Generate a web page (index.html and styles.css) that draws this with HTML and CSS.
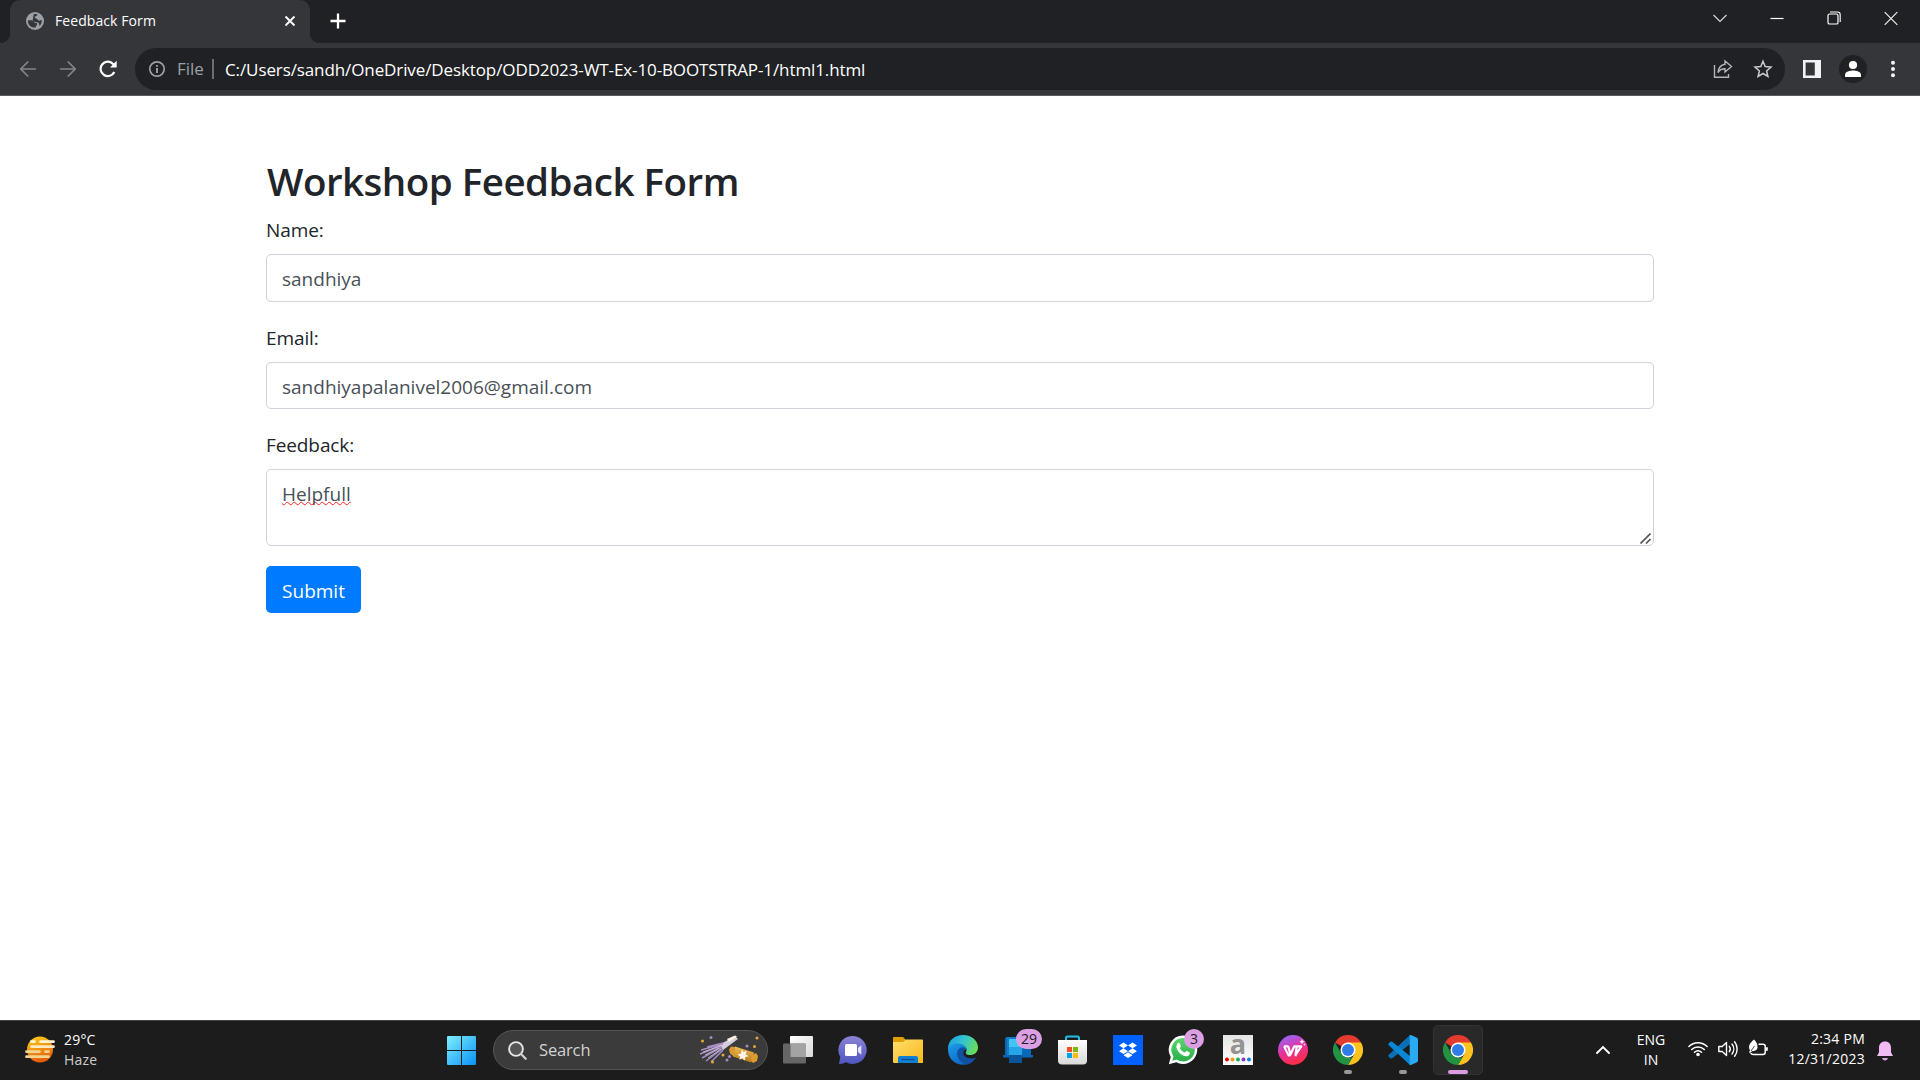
FILE: index.html
```html
<!DOCTYPE html>
<html lang="en">
<head>
<meta charset="utf-8">
<title>Feedback Form</title>
<link rel="stylesheet" href="styles.css">
</head>
<body>
<div class="screen">
  <header class="browser">
    <div class="tabstrip">
      <div class="tab">
        <svg class="globe" width="18" height="18" viewBox="0 0 18 18"><circle cx="9" cy="9" r="9" fill="#9aa0a6"/><path d="M2 8.2h3.2c2.6 0 2.2 2.6 4.2 2.6 1.600 0 1.900.8 1.700 1.800-.3 1.200-1.300 1.100-1.400 2.900-3.900.7-8.400-2.500-7.700-7.300zM7.800 2.200c2-.4 3 0 3.800.3-.2 1.600-2.600 1.300-2.800 2.600-.1 1.400 1.300 1.200 2.200 1.800 1 .7 1 1.700 2.200 1.800 1 .1 1.200-.6 2.500-.6.3 2.600-.8 4.900-2.400 6.200.3-2.200-.3-3.500-2.100-4-1.900-.5-3.700-.3-4.300-1.900-.6-1.500.6-2 .3-3.400z" fill="#35363a"/></svg>
        <span class="tab-title">Feedback Form</span>
        <svg class="tab-close" width="12" height="12" viewBox="0 0 12 12"><path d="M1.500 1.500l9 9m0-9l-9 9" stroke="#fff" stroke-width="1.900"/></svg>
      </div>
      <svg class="new-tab" width="16" height="16" viewBox="0 0 16 16"><path d="M8 .5v15M.5 8h15" stroke="#fff" stroke-width="2.300"/></svg>
      <div class="window-buttons">
        <svg width="14" height="20" viewBox="0 0 14 20"><path d="M.5 7L7 13.500 13.500 7" fill="none" stroke="#ddd" stroke-width="1.100"/></svg>
        <svg width="14" height="20" viewBox="0 0 14 20"><path d="M.5 10.500h13" stroke="#fff" stroke-width="1.200"/></svg>
        <svg width="14" height="20" viewBox="0 0 14 20"><rect x="1" y="6" width="10" height="10" rx="1.600" fill="none" stroke="#fff" stroke-width="1.200"/><path d="M3 4h7.500q2.700 0 2.700 2.700V14" fill="none" stroke="#fff" stroke-width="1.100"/></svg>
        <svg width="14" height="20" viewBox="0 0 14 20"><path d="M.7 4.200l12.600 12.600m0-12.600L.7 16.800" stroke="#eee" stroke-width="1.200"/></svg>
      </div>
    </div>
    <div class="toolbar">
      <div class="nav">
        <svg width="18" height="18" viewBox="0 0 18 18"><path d="M17 9H2M9.300 1.500L1.800 9l7.500 7.500" fill="none" stroke="#85868a" stroke-width="1.700"/></svg>
        <svg width="18" height="18" viewBox="0 0 18 18"><path d="M1 9h15M8.700 1.500L16.200 9l-7.500 7.500" fill="none" stroke="#85868a" stroke-width="1.700"/></svg>
        <svg width="18" height="18" viewBox="0 0 18 18"><path d="M15.300 12A7.200 7.200 0 1 1 13.800 3.700L15.500 5.500" fill="none" stroke="#fff" stroke-width="2.200"/><path d="M17.700.8v6.700H11z" fill="#fff"/></svg>
      </div>
      <div class="omnibox">
        <svg width="18" height="18" viewBox="0 0 18 18"><circle cx="9" cy="9" r="7.200" fill="none" stroke="#9aa0a6" stroke-width="1.700"/><path d="M9 8v5M9 5v1.800" stroke="#9aa0a6" stroke-width="1.900"/></svg>
        <span class="scheme">File</span>
        <span class="url">C:/Users/sandh/OneDrive/Desktop/ODD2023-WT-Ex-10-BOOTSTRAP-1/html1.html</span>
        <svg class="share" width="20" height="20" viewBox="0 0 20 20"><path d="M1.500 6v12.200h14V15M12 2l6.500 5.500-6.500 5.500V9.800C8.500 9.800 6.500 11 5 13.600 5.400 9 7.800 6 12 5.300z" fill="none" stroke="#b4b6b8" stroke-width="1.400"/></svg>
        <svg width="20" height="20" viewBox="0 0 20 20"><path d="M10 2.300l2.200 5.300 5.800.5-4.400 3.800 1.300 5.600L10 14.500l-4.900 3 1.300-5.600L2 8.100l5.800-.5z" fill="none" stroke="#c8cacc" stroke-width="1.500"/></svg>
      </div>
      <div class="tools">
        <svg width="18" height="18" viewBox="0 0 18 18"><path d="M0 0h18v18H0zM2.600 2.600v12.800h9.200V2.600z" fill="#f1f3f4" fill-rule="evenodd"/></svg>
        <svg width="28" height="28" viewBox="0 0 28 28"><circle cx="14" cy="14" r="14" fill="#202124"/><circle cx="14" cy="10" r="4.100" fill="#fff"/><path d="M6 22v-2.200c0-3 5-4.300 8-4.300s8 1.300 8 4.300V22z" fill="#fff"/></svg>
        <svg width="6" height="18" viewBox="0 0 6 18"><g fill="#f1f3f4"><circle cx="3" cy="2.700" r="2"/><circle cx="3" cy="9" r="2"/><circle cx="3" cy="15.300" r="2"/></g></svg>
      </div>
    </div>
  </header>

  <main class="page">
    <div class="container">
      <h2>Workshop Feedback Form</h2>
      <form>
        <div class="form-group">
          <label for="name">Name:</label>
          <input class="form-control" id="name" type="text" value="sandhiya">
        </div>
        <div class="form-group">
          <label for="email">Email:</label>
          <input class="form-control email" id="email" type="email" value="sandhiyapalanivel2006@gmail.com">
        </div>
        <div class="form-group">
          <label>Feedback:</label>
          <div class="form-control area"><span class="misspelled">Helpfull</span>
            <svg class="grip" width="11" height="11" viewBox="0 0 11 11"><path d="M.5 10.500l10-10M6 10.500L10.500 6" stroke="#555" stroke-width="1.600"/></svg>
          </div>
        </div>
        <button type="button" class="btn">Submit</button>
      </form>
    </div>
  </main>

  <footer class="taskbar">
    <div class="weather">
      <svg width="30" height="27" viewBox="0 0 30 27"><defs><linearGradient id="sun" x1="0" y1="0" x2=".3" y2="1"><stop offset="0" stop-color="#ffd21a"/><stop offset="1" stop-color="#e85d0c"/></linearGradient></defs><circle cx="15" cy="13.500" r="13" fill="url(#sun)"/><g stroke-width="2.800" stroke-linecap="round"><path d="M6.500 5.700h3M15.500 5.700h13" stroke="#fff3d0"/><path d="M6.500 10.700h22" stroke="#fdebc0"/><path d="M1.500 15.700h13M20.500 15.700h3M1.500 20.700h22" stroke="#f0d490"/></g></svg>
      <div class="weather-text"><span>29°C</span><span class="cond">Haze</span></div>
    </div>
    <div class="apps">
      <div class="app"><svg width="29" height="29" viewBox="0 0 29 29"><defs><linearGradient id="win" x1="0" y1="0" x2="1" y2="1"><stop offset="0" stop-color="#7df0ff"/><stop offset="1" stop-color="#0a90f5"/></linearGradient></defs><path d="M0 1q0-1 1-1h13v14H0zM15 0h13q1 0 1 1v13H15zM0 15h14v14H1q-1 0-1-1zM15 15h14v13q0 1-1 1H15z" fill="url(#win)"/></svg></div>
      <div class="search">
        <svg width="19" height="19" viewBox="0 0 19 19"><circle cx="8" cy="8" r="6.900" fill="#555" stroke="#e6e6e6" stroke-width="1.900"/><path d="M13 13l4.700 4.700" stroke="#d0d0d0" stroke-width="2.300" stroke-linecap="round"/></svg>
        <span class="search-label">Search</span>
        <svg class="party" width="60" height="30" viewBox="0 0 60 30"><defs><linearGradient id="gold" x1="0" y1="0" x2="0" y2="1"><stop offset="0" stop-color="#f0bd57"/><stop offset="1" stop-color="#b97919"/></linearGradient></defs><path d="M36 1l3 3-15 11-4-5z" fill="#d8cddd"/><path d="M38 1.500L30 7l-2-3 8-3.500z" fill="#fff0e4"/><path d="M24 9L2 15m20-4L1 19m22-7L3 23m20-9L7 26m17-11L12 27M24 8L8 12" stroke="#a58cc4" stroke-width="1.500" fill="none"/><path d="M23 10L4 17m18-3L9 23m-3-3l14-7" stroke="#eadbe8" stroke-width=".7"/><path d="M36 11.500l19 6-3 10-18-6z" fill="url(#gold)"/><path d="M36 12l-4-.5-2 3 1 4 4 3zM53 20l4-2 2 3-1 5-4 2-2-2z" fill="#dc9b30"/><path d="M43 14l1.400 3.100 3.300-1-1 3.200 3 2-3.500.8-.2 3.400-2.700-2.300-3 1.600.9-3.400-2.900-2 3.500-.6z" fill="#fff5e8"/><g fill="#e5a63d"><circle cx="3.500" cy="6" r="1.500"/><circle cx="13.500" cy="27" r="1.500"/><circle cx="24" cy="20" r="1.500"/><circle cx="58" cy="3" r="1.500"/><circle cx="55.500" cy="11.500" r="1.500"/></g><g fill="#a98abd"><circle cx="12" cy="2.500" r="1.500"/><circle cx="48" cy="11" r="1.500"/><circle cx="30.500" cy="21.500" r="1.500"/><circle cx="28" cy="25" r="1.500"/></g></svg>
      </div>
      <div class="app"><svg width="30" height="28" viewBox="0 0 30 28"><defs><linearGradient id="tv" x1="0" y1="0" x2="1" y2="1"><stop offset="0" stop-color="#fff"/><stop offset="1" stop-color="#d8d8d8"/></linearGradient></defs><rect x="7" width="23" height="21" rx="1" fill="url(#tv)"/><rect y="7.500" width="23" height="20" rx="1" fill="#666"/><path d="M7.500 8H23v13H7.500z" fill="#a3a3a3"/></svg></div>
      <div class="app"><svg width="30" height="30" viewBox="0 0 30 30"><defs><linearGradient id="chat" x1="0" y1="0" x2="0" y2="1"><stop offset="0" stop-color="#8b83d6"/><stop offset="1" stop-color="#5055c0"/></linearGradient></defs><path d="M15 1a14 14 0 1 1-7 26.300Q4 29.500 1 29l1.300-7A14 14 0 0 1 15 1z" fill="url(#chat)"/><rect x="7" y="9" width="12" height="12" rx="1.500" fill="#fff"/><path d="M20 13l3.300-2.800v9.600L20 17z" fill="#e8e5fa"/></svg></div>
      <div class="app"><svg width="30" height="26" viewBox="0 0 30 26"><defs><linearGradient id="fold" x1="0" y1="0" x2="1" y2="1"><stop offset="0" stop-color="#ffdf70"/><stop offset="1" stop-color="#f8b818"/></linearGradient></defs><path d="M0 1q0-1 1-1h9l2.500 2.500V8H0z" fill="#dfa000"/><path d="M0 5h10l3-2.500h16q1 0 1 1V26H1q-1 0-1-1z" fill="url(#fold)"/><path d="M5 26v-5q0-2 2-2h16q2 0 2 2v5z" fill="#0f7fd2"/><path d="M8.500 22.500h13" stroke="#0a4d91" stroke-width="1.200"/></svg></div>
      <div class="app"><svg width="30" height="30" viewBox="0 0 30 30"><defs><linearGradient id="edge1" x1="0" y1=".2" x2="1" y2=".5"><stop offset="0" stop-color="#1c9fe0"/><stop offset=".5" stop-color="#33c5d0"/><stop offset="1" stop-color="#68dc58"/></linearGradient><linearGradient id="edge2" x1="0" y1="0" x2=".6" y2="1"><stop offset="0" stop-color="#1c9ce8"/><stop offset="1" stop-color="#0b69c5"/></linearGradient></defs><path d="M0 14C0 5 7 0 15 0c9 0 15 6 15 12.500 0 5-4 7.500-8 7.500-3.500 0-5-1.500-4-3 2-3-1-7-6-7-6 0-11 2-12 5z" fill="url(#edge1)"/><path d="M0 14.500C1 10 6 8.500 10 8.500c5 0 8.500 3 8.500 6-3 0-6 3-5 7 1 3.500 5 8 10 6C14 33 0 28 0 14.500z" fill="url(#edge2)"/><path d="M10 15c3-4 7-3 8.500-.5-2 0-3.500 2-3 4.500 1 4 7 5.500 12.500 3.500-2 4-6 6.500-9 7C12 28 7 21 10 15z" fill="#114fa0"/></svg></div>
      <div class="app"><svg width="30" height="30" viewBox="0 0 30 30"><path d="M2 4q0-2 2-2h22q2 0 2 2v16h2v1.500q0 1-1 1H1q-1 0-1-1V20h2z" fill="#0968b8"/><path d="M4 2h12v18H4z" fill="#127bca"/><path d="M6 4h13v24H7q-1 0-1-1z" fill="#25a4e7"/><path d="M6 4h13v8H6z" fill="#43c5f4"/><path d="M6 20h13v8H7q-1 0-1-1z" fill="#08559b"/></svg><span class="badge two">29</span></div>
      <div class="app"><svg class="store" width="30" height="30" viewBox="0 0 30 30"><defs><linearGradient id="bag" x1="0" y1="0" x2="0" y2="1"><stop offset="0" stop-color="#fff"/><stop offset="1" stop-color="#d8d8d8"/></linearGradient></defs><path d="M8 6V3q0-1.500 1.500-1.500h10Q21 1.500 21 3v3" fill="none" stroke="#24bde8" stroke-width="2"/><path d="M0 5h29v20.500q0 4-4 4H4q-4 0-4-4z" fill="url(#bag)"/><path d="M9 12h5v5H9z" fill="#f25022"/><path d="M15 12h5v5h-5z" fill="#7fba00"/><path d="M9 18h5v5H9z" fill="#00a4ef"/><path d="M15 18h5v5h-5z" fill="#ffb900"/></svg></div>
      <div class="app"><svg width="30" height="30" viewBox="0 0 30 30"><path d="M0 0h30v30H0z" fill="#0061fe"/><path d="M10.500 7.500L15 10.400l-4.500 2.900L6 10.400zM19.500 7.500l4.500 2.900-4.500 2.900-4.500-2.900zM10.500 13.300l4.500 2.900-4.500 2.900L6 16.200zM19.500 13.300l4.500 2.900-4.500 2.900-4.500-2.900zM15 17.300l4.500 2.900L15 23.100l-4.500-2.900z" fill="#fff"/></svg></div>
      <div class="app"><svg width="30" height="30" viewBox="0 0 30 30"><defs><linearGradient id="wa" x1="0" y1="0" x2="0" y2="1"><stop offset="0" stop-color="#5ed66e"/><stop offset="1" stop-color="#27ae48"/></linearGradient></defs><path d="M15.300.5a14.200 14.200 0 1 1-7 26.700L.8 29.300l2-7.300A14.200 14.200 0 0 1 15.300.5z" fill="#fff"/><path d="M15.300 3a11.700 11.700 0 1 1-6.600 21.500L4.300 25.800l1.200-4.400A11.700 11.700 0 0 1 15.300 3z" fill="url(#wa)"/><path d="M9.500 8.500c1-1.200 2-.9 2.400.1l1 2.400c.2.800-1 1.600-1.200 2 1 2 2.700 3.700 5 4.600.6-.2 1.300-1.900 2-1.700l3 1.500c.7 1.500-1 3.700-3.300 3.800-4.600.2-10-5.500-10-9.400 0-1.300.5-2.500 1.100-3.300z" fill="#fff"/></svg><span class="badge one">3</span></div>
      <div class="app"><div class="amazon"><span class="amazon-a">a</span><svg width="30" height="30" viewBox="0 0 30 30"><circle cx="4" cy="24.500" r="2" fill="#e00"/><circle cx="9.500" cy="24.500" r="2" fill="#f59a13"/><circle cx="15" cy="24.500" r="2" fill="#15b35a"/><circle cx="20.500" cy="24.500" r="2" fill="#8a35d5"/><circle cx="26" cy="24.500" r="2" fill="#0a84dd"/></svg></div></div>
      <div class="app"><svg width="30" height="30" viewBox="0 0 30 30"><defs><linearGradient id="wps" x1=".2" y1="0" x2=".6" y2="1"><stop offset="0" stop-color="#8f6bff"/><stop offset=".5" stop-color="#e632a0"/><stop offset="1" stop-color="#ff2d3d"/></linearGradient></defs><circle cx="15" cy="15" r="15" fill="url(#wps)"/><path d="M6 11.300h3.300q1 0 1.300 1l1.700 7.500 4-8.500h2.500l-1.300 8.700 5.800-8.700h-3.600" fill="none" stroke="#fff" stroke-width="2.200" stroke-linejoin="round"/><path d="M6 11.300l4.600 9.200h1.700M17.500 20.500h1" fill="none" stroke="#fff" stroke-width="2"/><path d="M24 4l.8 2 2 .8-2 .8-.8 2-.8-2-2-.8 2-.8zM26.500 8.500l1 1-1 1-1-1z" fill="#fff"/></svg></div>
      <div class="app"><svg width="30" height="30" viewBox="0 0 30 30"><g id="chrome"><path d="M15 15L2 7.500A15 15 0 0 1 28 7.500z" fill="#e33b2e"/><path d="M15 7.500h13A15 15 0 0 1 15 30l6.500-11.200z" fill="#fcc31e"/><path d="M2 7.500l6.500 11.300c1.300 2.300 4 3.700 6.500 3.700h4.300L15 30A15 15 0 0 1 2 7.500z" fill="#229342"/><circle cx="15" cy="15" r="7.500" fill="#fff"/><circle cx="15" cy="15" r="6" fill="#2f7de9"/></g></svg><i class="running"></i></div>
      <div class="app"><svg width="30" height="30" viewBox="0 0 30 30"><path d="M1 19.500q-1.500 1.200 0 2.500l1.300 1.200q1 .8 2 0L22 9V0z" fill="#0a6fb5"/><path d="M1 10.500Q-.5 9.300 1 8l1.300-1.200q1-.8 2 0L22 21v9z" fill="#0a87d4"/><path d="M21.700.300Q22.500-.2 23.500.2l5.500 2.600q1 .5 1 1.700v21q0 1.200-1 1.700l-5.500 2.600q-1 .4-1.800-.1z" fill="#29aaf2"/></svg><i class="running"></i></div>
      <div class="app active"><svg width="30" height="30" viewBox="0 0 30 30"><use href="#chrome"/></svg><i class="running wide"></i></div>
    </div>
    <div class="tray">
      <svg class="chev" width="14" height="9" viewBox="0 0 14 9"><path d="M1 8l6-6 6 6" fill="none" stroke="#fff" stroke-width="1.900" stroke-linecap="round"/></svg>
      <div class="lang"><span>ENG</span><span>IN</span></div>
      <div class="status">
        <svg width="20" height="20" viewBox="0 0 20 20"><g fill="none" stroke="#fff" stroke-width="1.500" stroke-linecap="round"><path d="M.9 7.500a13 13 0 0 1 18.200 0M3.700 10.500a9 9 0 0 1 12.600 0M6.500 13.300a5 5 0 0 1 7 0"/></g><circle cx="10" cy="15.500" r="1.800" fill="#fff"/></svg>
        <svg width="20" height="20" viewBox="0 0 20 20"><g fill="none" stroke="#fff" stroke-width="1.400" stroke-linecap="round" stroke-linejoin="round"><path d="M.8 7.500h3.400L8.500 3.500v13l-4.300-4H.8zM11.300 7.300a4.500 4.500 0 0 1 0 5.400M14 5a8 8 0 0 1 0 10M16.600 2.800a11.500 11.500 0 0 1 0 14.400"/></g></svg>
        <svg width="20" height="20" viewBox="0 0 20 20"><path d="M10.500 5.200H15q2.200 0 2.200 2v6q0 2.200-2.200 2.200H5.500Q3 15.400 3 14" fill="none" stroke="#fff" stroke-width="1.500"/><path d="M18 8.300h1.800v3.400H18z" fill="#fff"/><path d="M6 .5C8 2.500 9.800 5 9.500 8.500 9.300 11 7 12.500 4.500 12l-2.500 2-1-.8 1-2C0 8 1 4.500 6 .5z" fill="#fff"/><path d="M6.500 7L3 12" stroke="#1c1c1c" stroke-width=".8"/></svg>
      </div>
      <div class="clock"><span>2:34 PM</span><span>12/31/2023</span></div>
      <svg class="bell" width="16" height="20" viewBox="0 0 16 20"><path d="M8 .5c3.800 0 6 2.700 6 6.200v4.500l2 3.800H0l2-3.800V6.700C2 3.200 4.200.5 8 .5z" fill="#f0bcf3"/><path d="M5 17h6q-.8 2.500-3 2.500T5 17z" fill="#d69fe0"/></svg>
    </div>
  </footer>
</div>
</body>
</html>
```
FILE: styles.css
```css
* { box-sizing: border-box; }
body { margin: 0; font-family: "Open Sans", "Noto Sans", sans-serif; }
svg { display: block; flex: none; }
.screen { width: 1920px; height: 1080px; display: flex; flex-direction: column; overflow: hidden; background: #fff; }

/* Browser frame */
.browser { height: 96px; background: #35363a; border-bottom: 1px solid #5a5b5e; color: #fff; }
.tabstrip { height: 43px; background: #202124; display: flex; align-items: flex-start; padding-left: 10px; }
.tab { position: relative; width: 300px; height: 43px; display: flex; align-items: center; padding: 0 14px 1px 16px; background: #35363a; border-radius: 10px 10px 0 0; }
.tab::before, .tab::after { content: ""; position: absolute; bottom: 0; width: 10px; height: 10px; }
.tab::before { left: -10px; background: radial-gradient(circle at 0 0, transparent 10px, #35363a 10.500px); }
.tab::after { right: -10px; background: radial-gradient(circle at 100% 0, transparent 10px, #35363a 10.500px); }
.tab-title { margin-left: 11px; font-size: 14px; line-height: 20px; letter-spacing: .08px; white-space: nowrap; }
.tab-close { margin-left: auto; }
.new-tab { margin: 13px 0 0 19.500px; }
.window-buttons { margin-left: auto; display: flex; gap: 43px; padding: 8px 22px 0 0; }
.toolbar { height: 52px; display: flex; align-items: center; }
.nav { width: 135px; display: flex; gap: 22px; padding-left: 19px; }
.omnibox { width: 1650px; height: 42px; border-radius: 21px; background: #202124; display: flex; align-items: center; padding: 0 12px 0 13px; font-size: 17px; }
.scheme { margin-left: 11px; width: 35px; color: #9aa0a6; border-right: 2px solid #6a6d71; line-height: 20px; box-sizing: content-box; }
.url { margin-left: 11px; white-space: nowrap; letter-spacing: -.105px; }
.share { margin: 0 20px 0 auto; }
.tools { display: flex; align-items: center; padding-left: 18px; gap: 18px; }
.tools svg:last-child { margin-left: 5px; }

/* Form */
.page { flex: 1; padding-top: 60px; color: #212529; }
.container { width: 1388px; margin: 0 auto; }
h2 { height: 48px; margin: 0 0 10px; padding: 1px 0 0 1px; font-size: 38.500px; line-height: 48px; font-weight: 600; letter-spacing: -.5px; white-space: nowrap; }
.form-group { margin-bottom: 20px; }
label { display: block; height: 30px; line-height: 30px; margin-bottom: 10px; padding-top: 1px; font-size: 19px; letter-spacing: -.1px; }
.form-control { display: block; width: 100%; height: 47.500px; margin: 0; border: 1px solid #ced4da; border-radius: 5px; padding: 9px 15px 7px; background: #fff; font-family: inherit; font-size: 19px; line-height: 30px; color: #495057; }
.email { padding: 10px 15px 6px; }
.area { position: relative; height: 77px; }
.misspelled { text-decoration: underline wavy #f22 1.300px; text-underline-offset: 0; text-decoration-skip-ink: none; }
.grip { position: absolute; right: 2px; bottom: 1px; }
.btn { display: block; width: 95px; height: 47px; border: 0; border-radius: 5px; background: #007bff; color: #fff; font: 19px/30px "Open Sans", sans-serif; padding: 2px 0 0; }

/* Taskbar */
.taskbar { height: 60px; border-top: 1px solid #404242; background: #1c1c1c; color: #fff; display: flex; font-size: 14px; line-height: 20px; }
.weather { width: 436px; display: flex; padding: 15px 0 0 25px; }
.weather-text { display: flex; flex-direction: column; margin: -6px 0 0 9px; align-items: flex-start; letter-spacing: .2px; }
.cond { color: #ccc; }
.apps { display: flex; align-items: center; gap: 5px; padding-bottom: 1px; }
.app { position: relative; width: 50px; height: 50px; display: flex; align-items: center; justify-content: center; border-radius: 5px; }
.active { background: #292929; border: 1px solid #333; }
.search { width: 275px; height: 40px; margin: 0 0 0 2px; border: 1px solid #555; border-radius: 20px; background: #3b3b3b; display: flex; align-items: center; padding: 0 8px 0 14px; }
.search-label { margin-left: 12px; font-size: 16.500px; letter-spacing: -.15px; color: #d2d2d2; }
.party { margin-left: auto; }
.badge { position: absolute; height: 20px; top: 4px; border-radius: 10px; background: #dd9fe3; color: #1c1c1c; text-align: center; font-size: 14px; line-height: 20px; }
.two { left: 23px; width: 26px; }
.one { left: 26px; width: 20px; }
.amazon { width: 30px; height: 30px; display: grid; justify-items: center; background: linear-gradient(#e4e4e4, #fff); }
.amazon > * { grid-area: 1 / 1; }
.amazon-a { font: bold 27px/18px "Open Sans", sans-serif; color: #949494; }
.running { position: absolute; bottom: 1px; width: 8px; height: 4px; border-radius: 2px; background: #999; }
.wide { width: 20px; bottom: 0; background: #dc9ce4; }
.tray { margin-left: auto; display: flex; padding-right: 27px; }
.chev { margin-top: 24px; }
.lang { width: 40px; margin: 9px 0 0 21px; display: flex; flex-direction: column; align-items: center; }
.status { display: flex; gap: 10px; margin: 18px 0 0 17px; }
.clock { width: 97px; margin-top: 8px; display: flex; flex-direction: column; align-items: flex-end; letter-spacing: .25px; }
.bell { margin: 20px 0 0 12px; }
```
